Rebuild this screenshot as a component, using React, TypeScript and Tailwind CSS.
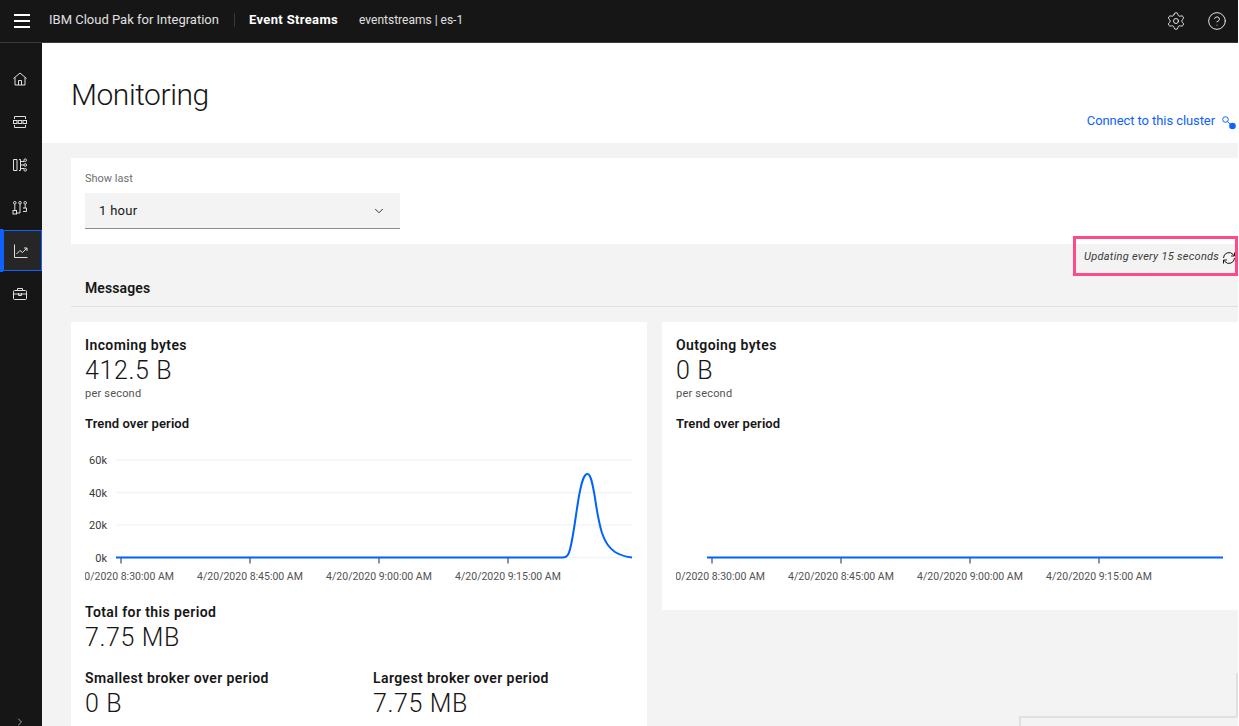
import React from 'react';
import { ChevronDown, ChevronRight, CircleHelp, Settings } from 'lucide-react';

const NavHome = () => (
	<svg width="16" height="16" viewBox="0 0 16 16" fill="none" stroke="currentColor" strokeWidth="1">
		<path d="M1.5 7.5 8 2l6.5 5.5M3 6.5v7.5h10V6.5M6.5 14V9.5h3V14" />
	</svg>
);

const NavTopics = () => (
	<svg width="16" height="16" viewBox="0 0 16 16" fill="none" stroke="currentColor" strokeWidth="1">
		<path d="M2.5 5V2.5h11V5M2.5 11v2.5h11V11" />
		<rect x="1.5" y="6.5" width="3.5" height="3" />
		<rect x="6.2" y="6.5" width="3.5" height="3" />
		<rect x="11" y="6.5" width="3.5" height="3" />
	</svg>
);

const NavSchemas = () => (
	<svg width="16" height="16" viewBox="0 0 16 16" fill="none" stroke="currentColor" strokeWidth="1">
		<path d="M1.5 2.5h3.5v11H1.5zM7 2.5h1.5v11H7M8.5 4.5H12M8.5 8H12M8.5 11.5H12" />
		<circle cx="13.2" cy="3.2" r="1.3" />
		<circle cx="13.2" cy="8" r="1.3" />
		<circle cx="13.2" cy="12.8" r="1.3" />
	</svg>
);

const NavGroups = () => (
	<svg width="16" height="16" viewBox="0 0 16 16" fill="none" stroke="currentColor" strokeWidth="1">
		<circle cx="2.8" cy="2.8" r="1.3" />
		<circle cx="8" cy="2.8" r="1.3" />
		<circle cx="13.2" cy="2.8" r="1.3" />
		<rect x="1" y="10.5" width="3.5" height="3.5" />
		<path d="M2.8 4.2v6.3M8 4.2V13H5M13.2 4.2V8M11 8h3.5v3.5H11" />
	</svg>
);

const NavMonitoring = () => (
	<svg width="16" height="16" viewBox="0 0 16 16" fill="none" stroke="currentColor" strokeWidth="1">
		<path d="M1.5 1.5v13h13" />
		<path d="M3.5 11 7 7.5l2.5 2L14 5M11 5h3v3" />
	</svg>
);

const NavToolbox = () => (
	<svg width="16" height="16" viewBox="0 0 16 16" fill="none" stroke="currentColor" strokeWidth="1">
		<rect x="1.5" y="4.5" width="13" height="9" rx="1" />
		<path d="M5.5 4.5v-2h5v2M1.5 8h13M6.5 7v2.5h3V7" />
	</svg>
);

const Hamburger = () => (
	<div className="flex w-4 flex-col gap-[4px]">
		<span className="h-[2px] bg-white" />
		<span className="h-[2px] bg-white" />
		<span className="h-[2px] bg-white" />
	</div>
);

const ConnectIcon = () => (
	<svg width="14" height="14" viewBox="0 0 14 14" fill="none" className="mt-[4px]">
		<circle cx="3.5" cy="3.5" r="2.8" stroke="#0f62fe" strokeWidth="1" />
		<path d="M5.5 5.5 8 8" stroke="#0f62fe" strokeWidth="1" />
		<circle cx="10.5" cy="10" r="3.3" fill="#0f62fe" />
	</svg>
);

const RefreshIcon = () => (
	<svg width="14" height="14" viewBox="0 0 14 14" fill="none" stroke="#161616" strokeWidth="1" className="shrink-0">
		<path d="M1.5 7a5.5 5.5 0 0 1 9.6-3.6L12.5 5" />
		<path d="M12.5 1.5V5H9" />
		<path d="M12.5 7a5.5 5.5 0 0 1-9.6 3.6L1.5 9" />
		<path d="M1.5 12.5V9H5" />
	</svg>
);

const xLabels = [
	{ x: 36, label: '4/20/2020 8:30:00 AM' },
	{ x: 165, label: '4/20/2020 8:45:00 AM' },
	{ x: 294, label: '4/20/2020 9:00:00 AM' },
	{ x: 423, label: '4/20/2020 9:15:00 AM' },
];

const yLabels = [
	{ y: 18, label: '60k' },
	{ y: 50.5, label: '40k' },
	{ y: 83, label: '20k' },
	{ y: 115.5, label: '0k' },
];

const TrendChart: React.FC<{ peak?: boolean }> = ({ peak }) => (
	<svg width="548" height="140" viewBox="0 0 548 140" className="block">
		{peak && yLabels.map((t) => (
			<g key={t.label}>
				<line x1="31" x2="547" y1={t.y} y2={t.y} stroke="#f4f4f4" strokeWidth="1.5" />
				<text x="22" y={t.y + 4} textAnchor="end" fontSize="11" fill="#393939" fontFamily="Roboto, sans-serif">
					{t.label}
				</text>
			</g>
		))}
		{xLabels.map((t) => (
			<g key={t.x}>
				<line x1={t.x} x2={t.x} y1="115" y2="121.5" stroke="#6f6f6f" strokeWidth="1.5" />
				<text x={t.x} y="138" textAnchor="middle" fontSize="10.5" fill="#525252" fontFamily="Roboto, sans-serif">
					{t.label}
				</text>
			</g>
		))}
		<path
			d={
				peak
					? 'M31 115.5 H478 C482 115.5 484 113 486 103 C489 90 491 71 494 54 C497 38 499 32 502.5 32 C506 32 508 44 510 56 C512 70 514 81 517 91 C520 100 524 106 530 110 C536 113.5 541 115 547 115.5'
					: 'M31 115.5 H547'
			}
			fill="none"
			stroke="#0062ff"
			strokeWidth="2"
		/>
	</svg>
);

const Stat: React.FC<{ title: string; value: string; className?: string }> = ({ title, value, className }) => (
	<div className={className}>
		<h4 className="text-[14px] leading-[18px] font-semibold tracking-[0.4px] text-[#161616]">{title}</h4>
		<p className="mt-[3px] text-[25px] leading-[28px] font-light tracking-[0.6px] text-[#161616]">{value}</p>
	</div>
);

const App: React.FC = () => {
	return (
		<div className="flex h-[726px] w-[1239px] flex-col overflow-hidden bg-white font-['Roboto',sans-serif]">
			<header className="flex h-[43px] w-[1238px] shrink-0 items-center border-b border-[#393939] bg-[#161616] text-white">
				<div className="flex w-[42px] justify-center pl-[1px]">
					<Hamburger />
				</div>
				<span className="ml-[7px] pb-[2px] text-[13px] text-[#e0e0e0]">IBM Cloud Pak for Integration</span>
				<span className="mb-[2px] ml-[15px] h-[14px] w-px bg-[#393939]" />
				<span className="ml-[14px] pb-[2px] text-[13px] font-bold tracking-[0.35px]">Event Streams</span>
				<span className="ml-[21px] pb-[2px] text-[12px] text-[#e0e0e0]">eventstreams | es-1</span>
				<div className="ml-auto flex items-center gap-[21px] pr-[11px] text-[#f4f4f4]">
					<Settings size={20} strokeWidth={1.1} />
					<CircleHelp size={20} strokeWidth={1.1} />
				</div>
			</header>

			<div className="flex min-h-0 flex-1">
				<nav className="flex w-[42px] shrink-0 flex-col items-center bg-[#161616] pt-[14px] text-[#e0e0e0]">
					<div className="flex h-[43px] w-full items-center justify-center pr-[2px]"><NavHome /></div>
					<div className="flex h-[43px] w-full items-center justify-center pr-[2px]"><NavTopics /></div>
					<div className="flex h-[43px] w-full items-center justify-center pr-[2px]"><NavSchemas /></div>
					<div className="flex h-[43px] w-full items-center justify-center pr-[2px]"><NavGroups /></div>
					<div className="flex h-[43px] w-full border-l-[3px] border-[#0f62fe]">
						<div className="my-[1px] flex flex-1 items-center justify-center border border-[#0f62fe] bg-[#262626] pr-[3px]">
							<NavMonitoring />
						</div>
					</div>
					<div className="flex h-[43px] w-full items-center justify-center pr-[2px]"><NavToolbox /></div>
					<div className="mt-auto flex h-[14px] items-start pr-[2px] pt-[4px] text-[#f4f4f4]">
						<ChevronRight size={12} strokeWidth={1.25} />
					</div>
				</nav>

				<main className="relative w-[1196px] bg-[#f3f3f3]">
					<section className="flex h-[100px] items-start justify-between bg-white pl-[29px]">
						<h1 className="mt-[31px] text-[30px] leading-[42px] font-light tracking-[-0.45px] text-[#161616]">Monitoring</h1>
						<a className="mt-[68px] flex items-center gap-[7px] pr-[2px] text-[13px] leading-[20px] tracking-[-0.08px] text-[#0f62fe]">
							Connect to this cluster
							<ConnectIcon />
						</a>
					</section>

					<div className="pl-[29px]">
						<section className="mt-[15px] h-[86px] bg-white px-[14px] pt-[13px]">
							<label className="block text-[11px] leading-[16px] text-[#6f6f6f]">Show last</label>
							<div className="mt-[6px] flex h-[36px] w-[315px] items-center justify-between border-b border-[#8d8d8d] bg-[#f3f3f3] pl-[14px] pr-[14px] text-[13px] tracking-[0.3px] text-[#161616]">
								1 hour
								<ChevronDown size={14} strokeWidth={1.5} />
							</div>
						</section>

						<div className="mt-[33px] flex h-[30px] items-center border-b border-[#e0e0e0] pb-[6px] pl-[14px]">
							<h3 className="text-[14px] font-semibold tracking-[0.1px] text-[#161616]">Messages</h3>
						</div>

						<div className="mt-[15px] flex items-start gap-[15px]">
							<article className="h-[420px] w-[576px] shrink-0 bg-white px-[14px] pt-[14px]">
								<Stat title="Incoming bytes" value="412.5 B" />
								<p className="mt-[1px] text-[11px] leading-[16px] tracking-[0.2px] text-[#525252]">per second</p>
								<h4 className="mt-[13px] text-[13px] leading-[18px] font-semibold tracking-[0.1px] text-[#161616]">Trend over period</h4>
								<div className="mt-[9px]">
									<TrendChart peak />
								</div>
								<Stat title="Total for this period" value="7.75 MB" className="mt-[21px]" />
								<div className="mt-[17px] flex">
									<Stat title="Smallest broker over period" value="0 B" className="w-[288px]" />
									<Stat title="Largest broker over period" value="7.75 MB" />
								</div>
							</article>
							<article className="h-[288px] w-[576px] shrink-0 bg-white px-[14px] pt-[14px]">
								<Stat title="Outgoing bytes" value="0 B" />
								<p className="mt-[1px] text-[11px] leading-[16px] tracking-[0.2px] text-[#525252]">per second</p>
								<h4 className="mt-[13px] text-[13px] leading-[18px] font-semibold tracking-[0.1px] text-[#161616]">Trend over period</h4>
								<div className="mt-[9px]">
									<TrendChart />
								</div>
							</article>
						</div>
					</div>

					{/* annotation box round the refresh note */}
					<div className="absolute left-[1031px] top-[193px] flex h-[40px] w-[165px] items-center gap-[3px] border-[3px] border-[#fc4a8a] pl-[8px] pt-[3px] text-[11px] tracking-[0.28px] whitespace-nowrap text-[#393939] italic">
						Updating every 15 seconds
						<RefreshIcon />
					</div>

					{/* floating widgets poking in at the corner */}
					<div className="absolute left-[977px] top-[673px] h-[60px] w-[218px] border-t-2 border-l-2 border-[#e0e0e0]" />
					<div className="absolute left-[1194px] top-[630px] h-[44px] w-[2px] bg-[#e0e0e0]" />
				</main>
			</div>
		</div>
	);
};

export default App;
